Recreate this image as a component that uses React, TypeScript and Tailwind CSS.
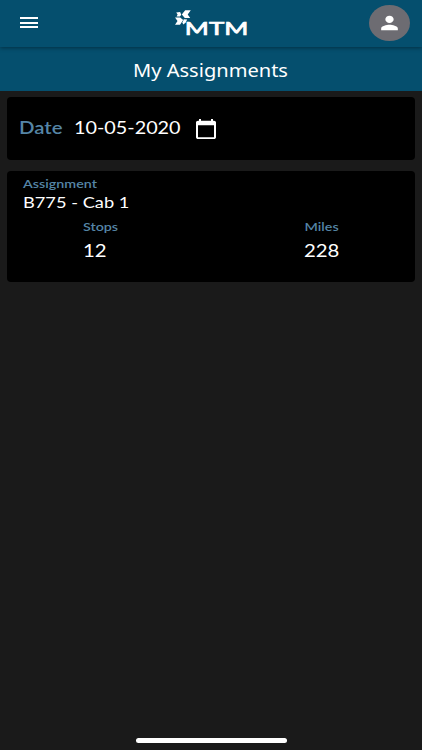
import { MdCalendarToday, MdPerson } from 'react-icons/md'

const totals = [
  { label: 'Stops', value: '12', className: 'items-start *:origin-left' },
  { label: 'Miles', value: '228', className: 'items-end *:origin-right' },
]

function Logo() {
  return (
    <svg width="76" height="30" viewBox="0 0 76 30" fill="white" role="img">
      <path d="M16.8 2.2h-5.6L7.8 6.4l3 3.7h5.4l-2.5-3.7z" />
      <path d="M2.2 4.4l3.9-.3 1.2 2.7-1.4 1.6H2.6l1-2z" />
      <path d="M1 9.4h5.2l3 2.7-3.2 4.6H1l2.5-3.6z" />
      <path d="M9.8 11.2l3.4.3-1.6 3.3-2.4 1.8-.8-2z" />
      <text
        x="10.8"
        y="27"
        fontSize="17.5"
        fontFamily="Lato, sans-serif"
        stroke="white"
        strokeWidth="0.7"
        textLength="63.5"
        lengthAdjust="spacingAndGlyphs"
      >
        MTM
      </text>
    </svg>
  )
}

function Header() {
  return (
    <header className="flex h-[47px] items-center justify-between bg-[#054f6e] pb-px pl-5 pr-3 shadow-[0_1px_4px_rgba(0,0,0,0.4)]">
      <button className="mb-px flex w-[35px] flex-col gap-[2.5px]" aria-label="Menu">
        <span className="h-[2px] w-[18px] bg-white" />
        <span className="h-[2px] w-[18px] bg-white" />
        <span className="h-[2px] w-[18px] bg-white" />
      </button>
      <Logo />
      <button
        className="flex h-9 w-[41px] items-center justify-center rounded-[50%] bg-[#6d6c72] text-white"
        aria-label="Profile"
      >
        <MdPerson className="h-[22px] w-[25px]" preserveAspectRatio="none" />
      </button>
    </header>
  )
}

export default function App() {
  return (
    <div className="flex h-[750px] w-full flex-col bg-[#1a1a1a] font-[Lato,sans-serif] text-white">
      <div className="relative z-10">
        <Header />
      </div>
      <div className="flex h-11 items-center justify-center bg-[#054f6e] pr-[2px] pt-px">
        <h1 className="scale-x-[1.115] whitespace-nowrap font-['Noto_Sans',sans-serif] text-[18px] leading-none">
          My Assignments
        </h1>
      </div>

      <main className="flex flex-1 flex-col gap-[11px] px-[7px] pt-[6px]">
        <section className="flex h-[63px] items-center rounded-[4px] bg-black pl-3">
          <span className="mb-1 w-[55px] text-[18px] font-semibold leading-none text-[#5585a6]">
            <span className="inline-block origin-left scale-x-[1.13]">Date</span>
          </span>
          <span className="mb-1 w-[120px] text-[18px] leading-none">
            <span className="inline-block origin-left scale-x-[1.1] whitespace-nowrap">10-05-2020</span>
          </span>
          <MdCalendarToday className="h-[22px] w-6" preserveAspectRatio="none" />
        </section>

        <section className="h-[111px] rounded-[4px] bg-black pt-[6px]">
          <div className="flex flex-col items-start pl-4">
            <span className="origin-left scale-x-[1.19] text-[12px] font-semibold leading-[14px] text-[#5585a6]">
              Assignment
            </span>
            <span className="mt-px origin-left scale-x-[1.14] text-[16px] leading-5">B775 - Cab 1</span>
          </div>
          <div className="mt-2 flex justify-between pl-[76px] pr-[76px]">
            {totals.map((total) => (
              <div key={total.label} className={`flex flex-col ${total.className}`}>
                <span className="scale-x-[1.19] text-[12px] font-semibold leading-[14px] text-[#5585a6]">
                  {total.label}
                </span>
                <span className="mt-[5px] scale-x-[1.13] text-[18px] leading-[22px]">{total.value}</span>
              </div>
            ))}
          </div>
        </section>
      </main>

      <div className="mb-[7px] h-[5px] w-[151px] self-center rounded-full bg-white" />
    </div>
  )
}
